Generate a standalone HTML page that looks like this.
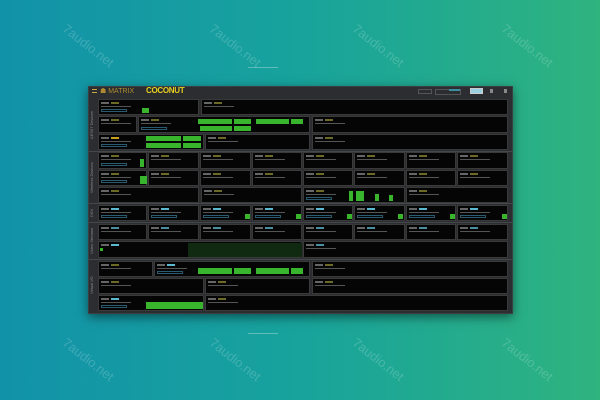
<!DOCTYPE html>
<html><head><meta charset="utf-8"><style>
*{margin:0;padding:0;box-sizing:border-box}
body{width:600px;height:400px;overflow:hidden;position:relative;font-family:"Liberation Sans",sans-serif;background:linear-gradient(90deg,#1292a9 0%,#18a39c 50%,#2fb37f 100%)}
.wm{position:absolute;color:rgba(255,255,255,.18);font-size:13px;transform:rotate(38deg);white-space:nowrap}
.win{position:absolute;left:88px;top:86px;width:425px;height:228px;background:#2b2d30;border:1px solid #3c3f42;box-shadow:0 3px 10px rgba(0,0,0,.5)}
.c{position:absolute;background:#050505;border:1px solid #3a3a3a}
.c i{position:absolute;left:2px;top:2px;width:8px;height:2px;background:#666;font-style:normal}
.c b{position:absolute;left:12px;top:2px;width:8px;height:2px;background:#6d6a28}
.c s{position:absolute;left:2px;top:6px;width:30px;height:1px;background:#555}
.c u{position:absolute;left:2px;bottom:2px;width:26px;height:3px;border:1px solid #2a5a70}
.g{position:absolute;background:#38b52c}
.lbl{position:absolute;left:89px;width:8px;color:#888;font-size:4px;writing-mode:vertical-rl;transform:rotate(180deg);text-align:center}
.sep{position:absolute;left:89px;width:423px;height:1px;background:#45484b}
</style></head><body>
<div class="wm" style="left:58px;top:38px">7audio.net</div>
<div class="wm" style="left:205px;top:38px">7audio.net</div>
<div class="wm" style="left:348px;top:38px">7audio.net</div>
<div class="wm" style="left:497px;top:38px">7audio.net</div>
<div class="wm" style="left:58px;top:352px">7audio.net</div>
<div class="wm" style="left:205px;top:352px">7audio.net</div>
<div class="wm" style="left:348px;top:352px">7audio.net</div>
<div class="wm" style="left:497px;top:352px">7audio.net</div>
<div style="position:absolute;left:248px;top:67px;width:30px;height:1px;background:rgba(255,255,255,.3)"></div>
<div style="position:absolute;left:248px;top:333px;width:30px;height:1px;background:rgba(255,255,255,.3)"></div>
<div class="win"></div>
<div style="position:absolute;left:92px;top:89px;width:5px;height:4px;border-top:1px solid #c9a640;border-bottom:1px solid #c9a640"></div>
<div style="position:absolute;left:100px;top:87px;font-size:7px;color:#b08a30">☗ MATRIX</div>
<div style="position:absolute;left:146px;top:86px;font-size:8px;font-weight:bold;color:#e8d020;letter-spacing:-.3px">COCONUT</div>
<div style="position:absolute;left:418px;top:89px;width:14px;height:5px;border:1px solid #555"></div>
<div style="position:absolute;left:435px;top:89px;width:26px;height:6px;border:1px solid #555"></div>
<div style="position:absolute;left:449px;top:89px;width:11px;height:2px;background:#3a8fa0"></div>
<div style="position:absolute;left:470px;top:88px;width:13px;height:6px;background:#9ad0e0;border:1px solid #ccc"></div>
<div style="position:absolute;left:490px;top:89px;width:3px;height:4px;background:#888"></div>
<div style="position:absolute;left:504px;top:89px;width:3px;height:4px;background:#888"></div>

<div class="lbl" style="top:99px;height:52px">AES67 Devices</div>
<div class="lbl" style="top:152px;height:51px">Wireless Devices</div>
<div class="lbl" style="top:204px;height:18px">DIDI</div>
<div class="lbl" style="top:223px;height:36px">Video Streams</div>
<div class="lbl" style="top:260px;height:51px">Virtual I/O</div>
<div class="sep" style="top:151px"></div><div class="sep" style="top:203px"></div><div class="sep" style="top:222px"></div><div class="sep" style="top:259px"></div>

<!-- AES67 -->
<div class="c" style="left:98px;top:99px;width:101px;height:16px"><i></i><b></b><s></s><u></u></div>
<div class="c" style="left:201px;top:99px;width:307px;height:16px"><i></i><b></b><s></s></div>
<div class="c" style="left:98px;top:116px;width:39px;height:17px"><i></i><b></b><s></s></div>
<div class="c" style="left:138px;top:116px;width:172px;height:17px"><i></i><b></b><s></s><u></u></div>
<div class="c" style="left:312px;top:116px;width:196px;height:17px"><i></i><b></b><s></s></div>
<div class="c" style="left:98px;top:134px;width:106px;height:16px"><i></i><b style="background:#c8a020"></b><s></s><u></u></div>
<div class="c" style="left:205px;top:134px;width:105px;height:16px"><i></i><b></b><s></s></div>
<div class="c" style="left:312px;top:134px;width:196px;height:16px"><i></i><b></b><s></s></div>
<div class="g" style="left:142px;top:108px;width:7px;height:5px"></div>
<div class="g" style="left:198px;top:119px;width:34px;height:5px"></div><div class="g" style="left:234px;top:119px;width:17px;height:5px"></div><div class="g" style="left:256px;top:119px;width:33px;height:5px"></div><div class="g" style="left:291px;top:119px;width:12px;height:5px"></div>
<div class="g" style="left:200px;top:126px;width:32px;height:5px"></div><div class="g" style="left:234px;top:126px;width:17px;height:5px"></div>
<div class="g" style="left:146px;top:136px;width:35px;height:5px"></div><div class="g" style="left:183px;top:136px;width:18px;height:5px"></div>
<div class="g" style="left:146px;top:143px;width:35px;height:5px"></div><div class="g" style="left:183px;top:143px;width:18px;height:5px"></div>

<!-- Wireless rows 1,2 -->
<div class="c" style="left:98px;top:152px;width:49px;height:17px"><i></i><b></b><s></s><u></u></div>
<div class="c" style="left:148px;top:152px;width:51px;height:17px"><i></i><b></b><s></s></div>
<div class="c" style="left:200px;top:152px;width:51px;height:17px"><i></i><b></b><s></s></div>
<div class="c" style="left:252px;top:152px;width:50px;height:17px"><i></i><b></b><s></s></div>
<div class="c" style="left:303px;top:152px;width:50px;height:17px"><i></i><b></b><s></s></div>
<div class="c" style="left:354px;top:152px;width:51px;height:17px"><i></i><b></b><s></s></div>
<div class="c" style="left:406px;top:152px;width:50px;height:17px"><i></i><b></b><s></s></div>
<div class="c" style="left:457px;top:152px;width:51px;height:17px"><i></i><b></b><s></s></div>
<div class="c" style="left:98px;top:170px;width:49px;height:16px"><i></i><b></b><s></s><u></u></div>
<div class="c" style="left:148px;top:170px;width:51px;height:16px"><i></i><b></b><s></s></div>
<div class="c" style="left:200px;top:170px;width:51px;height:16px"><i></i><b></b><s></s></div>
<div class="c" style="left:252px;top:170px;width:50px;height:16px"><i></i><b></b><s></s></div>
<div class="c" style="left:303px;top:170px;width:50px;height:16px"><i></i><b></b><s></s></div>
<div class="c" style="left:354px;top:170px;width:51px;height:16px"><i></i><b></b><s></s></div>
<div class="c" style="left:406px;top:170px;width:50px;height:16px"><i></i><b></b><s></s></div>
<div class="c" style="left:457px;top:170px;width:51px;height:16px"><i></i><b></b><s></s></div>
<div class="g" style="left:140px;top:159px;width:4px;height:8px"></div>
<div class="g" style="left:140px;top:176px;width:7px;height:8px"></div>
<div class="c" style="left:98px;top:187px;width:101px;height:16px"><i></i><b></b><s></s></div>
<div class="c" style="left:201px;top:187px;width:101px;height:16px"><i></i><b></b><s></s></div>
<div class="c" style="left:303px;top:187px;width:102px;height:16px"><i></i><b></b><s></s><u></u></div>
<div class="c" style="left:406px;top:187px;width:102px;height:16px"><i></i><b></b><s></s></div>
<div class="g" style="left:349px;top:191px;width:4px;height:10px"></div><div class="g" style="left:356px;top:191px;width:8px;height:10px"></div><div class="g" style="left:375px;top:194px;width:4px;height:7px"></div><div class="g" style="left:389px;top:195px;width:4px;height:6px"></div>

<!-- DIDI -->
<div class="c" style="left:98px;top:205px;width:49px;height:16px"><i></i><b style="background:#5ab8d0"></b><s></s><u></u></div>
<div class="c" style="left:148px;top:205px;width:51px;height:16px"><i></i><b style="background:#5ab8d0"></b><s></s><u></u></div>
<div class="c" style="left:200px;top:205px;width:51px;height:16px"><i></i><b style="background:#5ab8d0"></b><s></s><u></u></div>
<div class="c" style="left:252px;top:205px;width:50px;height:16px"><i></i><b style="background:#5ab8d0"></b><s></s><u></u></div>
<div class="c" style="left:303px;top:205px;width:50px;height:16px"><i></i><b style="background:#5ab8d0"></b><s></s><u></u></div>
<div class="c" style="left:354px;top:205px;width:51px;height:16px"><i></i><b style="background:#5ab8d0"></b><s></s><u></u></div>
<div class="c" style="left:406px;top:205px;width:50px;height:16px"><i></i><b style="background:#5ab8d0"></b><s></s><u></u></div>
<div class="c" style="left:457px;top:205px;width:51px;height:16px"><i></i><b style="background:#5ab8d0"></b><s></s><u></u></div>
<div class="g" style="left:245px;top:214px;width:5px;height:5px"></div><div class="g" style="left:296px;top:214px;width:5px;height:5px"></div><div class="g" style="left:347px;top:214px;width:5px;height:5px"></div><div class="g" style="left:398px;top:214px;width:5px;height:5px"></div><div class="g" style="left:450px;top:214px;width:5px;height:5px"></div><div class="g" style="left:502px;top:214px;width:5px;height:5px"></div>

<!-- Video -->
<div class="c" style="left:98px;top:224px;width:49px;height:16px"><i></i><b style="background:#4a8fa0"></b><s></s></div>
<div class="c" style="left:148px;top:224px;width:51px;height:16px"><i></i><b style="background:#4a8fa0"></b><s></s></div>
<div class="c" style="left:200px;top:224px;width:51px;height:16px"><i></i><b style="background:#4a8fa0"></b><s></s></div>
<div class="c" style="left:252px;top:224px;width:50px;height:16px"><i></i><b style="background:#4a8fa0"></b><s></s></div>
<div class="c" style="left:303px;top:224px;width:50px;height:16px"><i></i><b style="background:#4a8fa0"></b><s></s></div>
<div class="c" style="left:354px;top:224px;width:51px;height:16px"><i></i><b style="background:#4a8fa0"></b><s></s></div>
<div class="c" style="left:406px;top:224px;width:50px;height:16px"><i></i><b style="background:#4a8fa0"></b><s></s></div>
<div class="c" style="left:457px;top:224px;width:51px;height:16px"><i></i><b style="background:#4a8fa0"></b><s></s></div>
<div class="c" style="left:98px;top:241px;width:204px;height:17px"><i></i><b style="background:#5ab8d0"></b></div>
<div class="c" style="left:303px;top:241px;width:205px;height:17px"><i></i><b style="background:#4a8fa0"></b><s></s></div>
<div class="g" style="left:100px;top:248px;width:3px;height:3px"></div>
<div style="position:absolute;left:188px;top:243px;width:114px;height:14px;background:#102a12"></div>

<!-- Virtual -->
<div class="c" style="left:98px;top:261px;width:55px;height:16px"><i></i><b></b><s></s></div>
<div class="c" style="left:154px;top:261px;width:156px;height:16px"><i></i><b style="background:#5ab8d0"></b><s></s><u></u></div>
<div class="c" style="left:312px;top:261px;width:196px;height:16px"><i></i><b></b><s></s></div>
<div class="c" style="left:98px;top:278px;width:106px;height:16px"><i></i><b></b><s></s></div>
<div class="c" style="left:205px;top:278px;width:105px;height:16px"><i></i><b></b><s></s></div>
<div class="c" style="left:312px;top:278px;width:196px;height:16px"><i></i><b></b><s></s></div>
<div class="c" style="left:98px;top:295px;width:106px;height:16px"><i></i><b style="background:#5ab8d0"></b><s></s><u></u></div>
<div class="c" style="left:205px;top:295px;width:303px;height:16px"><i></i><b></b><s></s></div>
<div class="g" style="left:198px;top:268px;width:34px;height:6px"></div><div class="g" style="left:234px;top:268px;width:17px;height:6px"></div><div class="g" style="left:256px;top:268px;width:33px;height:6px"></div><div class="g" style="left:291px;top:268px;width:12px;height:6px"></div>
<div class="g" style="left:146px;top:302px;width:57px;height:7px"></div>
</body></html>
